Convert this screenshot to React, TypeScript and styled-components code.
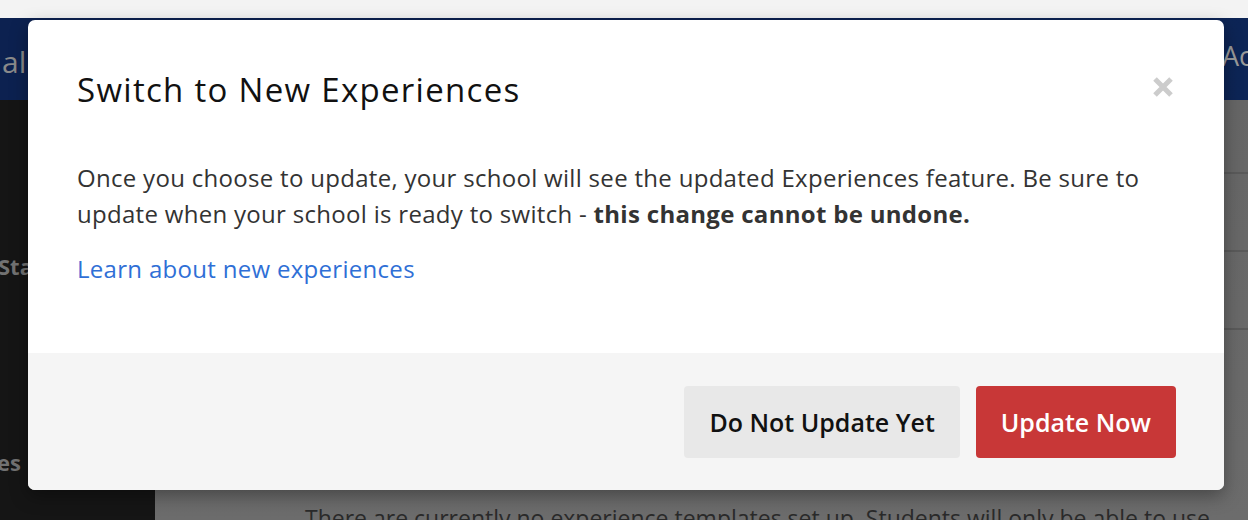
import React from "react";
import styled, { createGlobalStyle } from "styled-components";

const GlobalStyle = createGlobalStyle`
  html, body {
    margin: 0;
    padding: 0;
    background: #6a6a6a;
    font-family: "Open Sans", "Liberation Sans", sans-serif;
  }
  * { box-sizing: border-box; }
`;

const Page = styled.div`
  position: relative;
  width: 1248px;
  height: 520px;
  overflow: hidden;
  display: flex;
  flex-direction: column;
`;

const TopStrip = styled.div`
  height: 18px;
  background: #f3f3f3;
  flex: none;
`;

const Header = styled.div`
  height: 82px;
  flex: none;
  background: linear-gradient(90deg, #0c2150, #0b2050 60%, #0d2556);
  display: flex;
  justify-content: space-between;
  align-items: flex-start;
  color: #8a8a8a;
  line-height: 1;
`;

const HeaderLeft = styled.span`
  font-size: 30px;
  margin-top: 29px;
  margin-left: 2px;
`;

const HeaderRight = styled.span`
  margin-top: 24px;
  margin-right: -4px;
  font-size: 27px;
  color: #9a9a9a;
`;

const Main = styled.div`
  flex: 1;
  display: flex;
`;

const Sidebar = styled.div`
  width: 155px;
  flex: none;
  background: #151515;
  display: flex;
  flex-direction: column;
  color: #727272;
  font-weight: 700;
  font-size: 22px;
`;

const SideLabel = styled.div<{ $top: number; $left: number }>`
  margin-top: ${(p) => p.$top}px;
  margin-left: ${(p) => p.$left}px;
`;

const Content = styled.div`
  flex: 1;
  background: linear-gradient(180deg, #666 0%, #6c6c6c 100%);
  display: flex;
  flex-direction: column;
`;

const Row = styled.div`
  height: 78px;
  border-bottom: 2px solid #5a5a5a;
  flex: none;
`;

const FirstRow = styled(Row)`
  height: 74px;
`;

const EmptyText = styled.div`
  margin-top: auto;
  margin-left: 150px;
  margin-bottom: -14px;
  white-space: nowrap;
  font-size: 23px;
  color: #2a2a2a;
`;

const Modal = styled.div`
  position: absolute;
  left: 28px;
  top: 20px;
  width: 1196px;
  height: 470px;
  background: #fff;
  border-radius: 7px;
  overflow: hidden;
  box-shadow: 0 6px 18px rgba(0, 0, 0, 0.35);
  display: flex;
  flex-direction: column;
`;

const ModalBody = styled.div`
  height: 333px;
  flex: none;
  padding: 48px 49px 0 49px;
  position: relative;
`;

const Title = styled.h2`
  margin: 0;
  font-size: 33px;
  font-weight: 500;
  line-height: 44px;
  letter-spacing: 1.3px;
  color: #111;
`;

const CloseButton = styled.button`
  position: absolute;
  top: 56px;
  right: 50px;
  width: 22px;
  height: 22px;
  padding: 0;
  border: none;
  background: none;
  display: flex;
  align-items: center;
  justify-content: center;
`;

const Text = styled.p`
  margin: 48px 0 0 0;
  font-size: 24px;
  line-height: 36px;
  letter-spacing: 0.3px;
  color: #333;
`;

const Strong = styled.strong`
  font-weight: 700;
`;

const LearnLink = styled.a`
  display: inline-block;
  margin-top: 19px;
  font-size: 24px;
  line-height: 36px;
  letter-spacing: 0.3px;
  color: #2f6fd6;
  text-decoration: none;
`;

const Footer = styled.div`
  flex: 1;
  background: #f5f5f5;
  display: flex;
  justify-content: flex-end;
  align-items: flex-start;
  gap: 16px;
  padding: 33px 48px 0 0;
`;

const Button = styled.button<{ $primary?: boolean }>`
  height: 72px;
  padding: 0 25px;
  border: none;
  border-radius: 4px;
  font-family: inherit;
  font-size: 25px;
  font-weight: 600;
  background: ${(p) => (p.$primary ? "#c83737" : "#e8e8e8")};
  color: ${(p) => (p.$primary ? "#fff" : "#111")};
  cursor: pointer;
`;

export default function App() {
  return (
    <>
      <GlobalStyle />
      <Page>
        <TopStrip />
        <Header>
          <HeaderLeft>al</HeaderLeft>
          <HeaderRight>Ac</HeaderRight>
        </Header>
        <Main>
          <Sidebar>
            <SideLabel $top={151} $left={-2}>Stat</SideLabel>
            <SideLabel $top={166} $left={-3}>es</SideLabel>
          </Sidebar>
          <Content>
            <FirstRow />
            <Row />
            <Row />
            <EmptyText>
              There are currently no experience templates set up. Students will only be able to use
            </EmptyText>
          </Content>
        </Main>
        <Modal role="dialog">
          <ModalBody>
            <Title>Switch to New Experiences</Title>
            <CloseButton aria-label="Close">
              <svg width="22" height="22" viewBox="0 0 22 22">
                <path d="M3 3 L19 19 M19 3 L3 19" stroke="#cccccc" strokeWidth="5" strokeLinecap="butt" />
              </svg>
            </CloseButton>
            <Text>
              Once you choose to update, your school will see the updated Experiences feature. Be sure to update
              when your school is ready to switch - <Strong>this change cannot be undone.</Strong>
            </Text>
            <LearnLink href="#">Learn about new experiences</LearnLink>
          </ModalBody>
          <Footer>
            <Button>Do Not Update Yet</Button>
            <Button $primary>Update Now</Button>
          </Footer>
        </Modal>
      </Page>
    </>
  );
}
